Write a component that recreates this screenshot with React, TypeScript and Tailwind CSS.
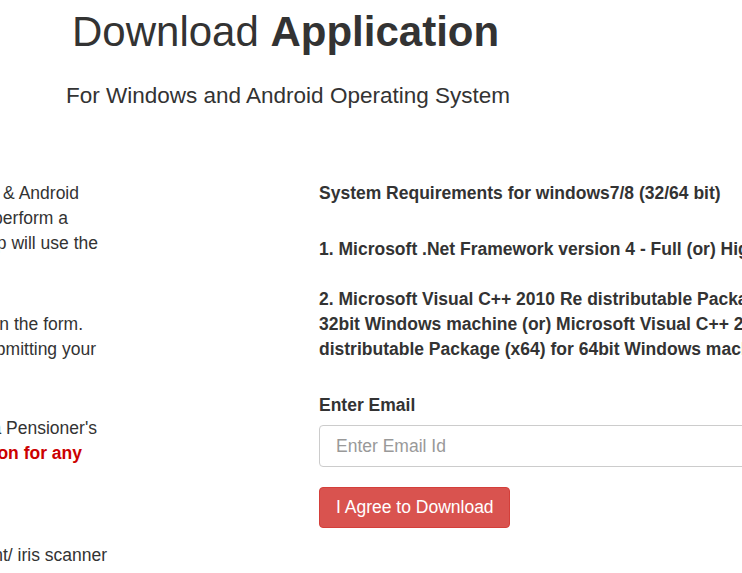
import React from "react";

export default function App() {
  return (
    <div
      className="relative w-full h-[573px] overflow-hidden bg-white text-[#333]"
      style={{ fontFamily: '"Liberation Sans", Arial, sans-serif' }}
    >
      <h1 className="pt-[9px] pl-[72px] text-[42px] leading-[46px] font-normal whitespace-nowrap">
        Download <b className="font-bold">Application</b>
      </h1>
      <h3 className="mt-[28px] pl-[66px] text-[22.5px] leading-[26px] font-normal whitespace-nowrap">
        For Windows and Android Operating System
      </h3>

      <div className="mt-[72px] flex">
        {/* left column: cut by the window's left edge */}
        <div className="w-[760px] shrink-0 -ml-[650px] text-[17.5px] leading-[25px] overflow-hidden">
          <div>
            <div className="whitespace-nowrap text-right pr-[31px]">
              Jeevan Pramaan application is available for Windows &amp; Android
            </div>
            <div className="whitespace-nowrap text-right pr-[42px]">
              Operating System. The Pensioner needs to perform a
            </div>
            <div className="whitespace-nowrap text-right pr-[12px]">
              one time registration. The app will use the
            </div>
          </div>
          <div className="mt-[56px]">
            <div className="whitespace-nowrap text-right pr-[27px]">
              Please fill in all the details given in the form.
            </div>
            <div className="whitespace-nowrap text-right pr-[14px]">
              You will receive a download link after submitting your
            </div>
          </div>
          <div className="mt-[54px]">
            <div className="whitespace-nowrap text-right pr-[13px]">
              The Sanctioning Authority will verify a Pensioner's
            </div>
            <div className="whitespace-nowrap text-right pr-[28px] font-bold text-[#cc0000]">
              Department will take no responsibility or action for any
            </div>
          </div>
          <div className="mt-[77px]">
            <div className="whitespace-nowrap text-right pr-[3px]">
              Please connect the fingerprint/ iris scanner
            </div>
          </div>
        </div>

        {/* right column */}
        <div className="flex-1 min-w-0 pl-[209px] text-[17.5px] leading-[25px] font-bold">
          <div className="whitespace-nowrap">System Requirements for windows7/8 (32/64 bit)</div>
          <div className="mt-[31px] whitespace-nowrap">
            1. Microsoft .Net Framework version 4 - Full (or) Higher
          </div>
          <div className="mt-[25px] w-[460px]">
            <div className="whitespace-nowrap">2. Microsoft Visual C++ 2010 Re distributable Package (x86) for</div>
            <div className="whitespace-nowrap">32bit Windows machine (or) Microsoft Visual C++ 2010 Re</div>
            <div className="whitespace-nowrap">distributable Package (x64) for 64bit Windows machine</div>
          </div>
          <label className="block mt-[31px] whitespace-nowrap">Enter Email</label>
          <input
            type="text"
            placeholder="Enter Email Id"
            className="mt-[7px] block w-[460px] h-[42px] rounded-[4px] border border-[#ccc] px-[16px] text-[17.5px] font-normal text-[#555] placeholder:text-[#999] outline-none"
          />
          <button
            type="button"
            className="mt-[20px] h-[41px] w-[191px] rounded-[4px] border border-[#d43f3a] bg-[#d9534f] px-[16px] text-left text-[17.5px] font-normal text-white whitespace-nowrap"
          >
            I Agree to Download
          </button>
        </div>
      </div>
    </div>
  );
}
